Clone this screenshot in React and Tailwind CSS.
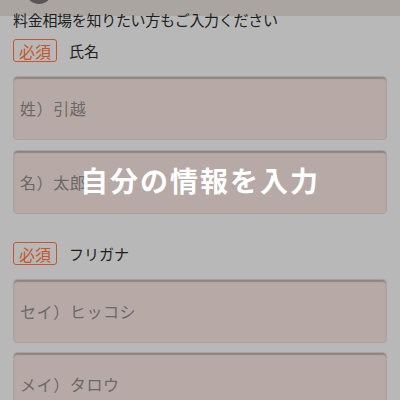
import React from 'react';

const jp = { fontFamily: '"Noto Sans CJK JP", "Noto Sans", sans-serif' };

function Label({ text }) {
  return (
    <div className="flex items-center gap-3 h-[23px]">
      <span className="h-[23px] w-[44px] flex items-center justify-center rounded-[3px] border-[1.5px] border-[#c4582c] text-[#c4582c] text-[16px] leading-none">
        必須
      </span>
      <span className="text-[15px] text-[#1e1e1e] leading-none">{text}</span>
    </div>
  );
}

function Field({ placeholder }) {
  return (
    <div className="h-[64px] rounded-[4px] bg-[#b7aaa6] border border-[#aaa19d] shadow-[inset_0_2px_1px_rgba(0,0,0,0.22)] flex items-center px-[6px]">
      <span className="text-[16px] text-[#6b6866] tracking-[0.6px]">{placeholder}</span>
    </div>
  );
}

export default function App() {
  return (
    <div className="relative w-[400px] h-[400px] overflow-hidden bg-[#b8b8b8]" style={jp}>
      {/* header strip */}
      <div className="h-[16px] bg-[#aaa5a1] relative">
        <div className="absolute left-[26px] top-[-22px] w-[26px] h-[26px] rounded-full bg-[#5a5655]" />
      </div>

      <div className="px-[13px] -mt-[5px] relative">
        <p className="text-[15px] text-[#1e1e1e] leading-[18px] tracking-[-0.3px]">料金相場を知りたい方もご入力ください</p>

        <div className="mt-[10px]">
          <Label text="氏名" />
        </div>
        <div className="mt-[14px] flex flex-col gap-[10px]">
          <Field placeholder="姓）引越" />
          <Field placeholder="名）太郎" />
        </div>

        <div className="mt-[28px]">
          <Label text="フリガナ" />
        </div>
        <div className="mt-[14px] flex flex-col gap-[9px]">
          <Field placeholder="セイ）ヒッコシ" />
          <Field placeholder="メイ）タロウ" />
        </div>
      </div>

      {/* overlay caption */}
      <div className="absolute left-0 right-0 top-[161px] flex justify-center">
        <span className="text-white font-bold text-[28px] tracking-[2px] leading-[38px]">自分の情報を入力</span>
      </div>
    </div>
  );
}
